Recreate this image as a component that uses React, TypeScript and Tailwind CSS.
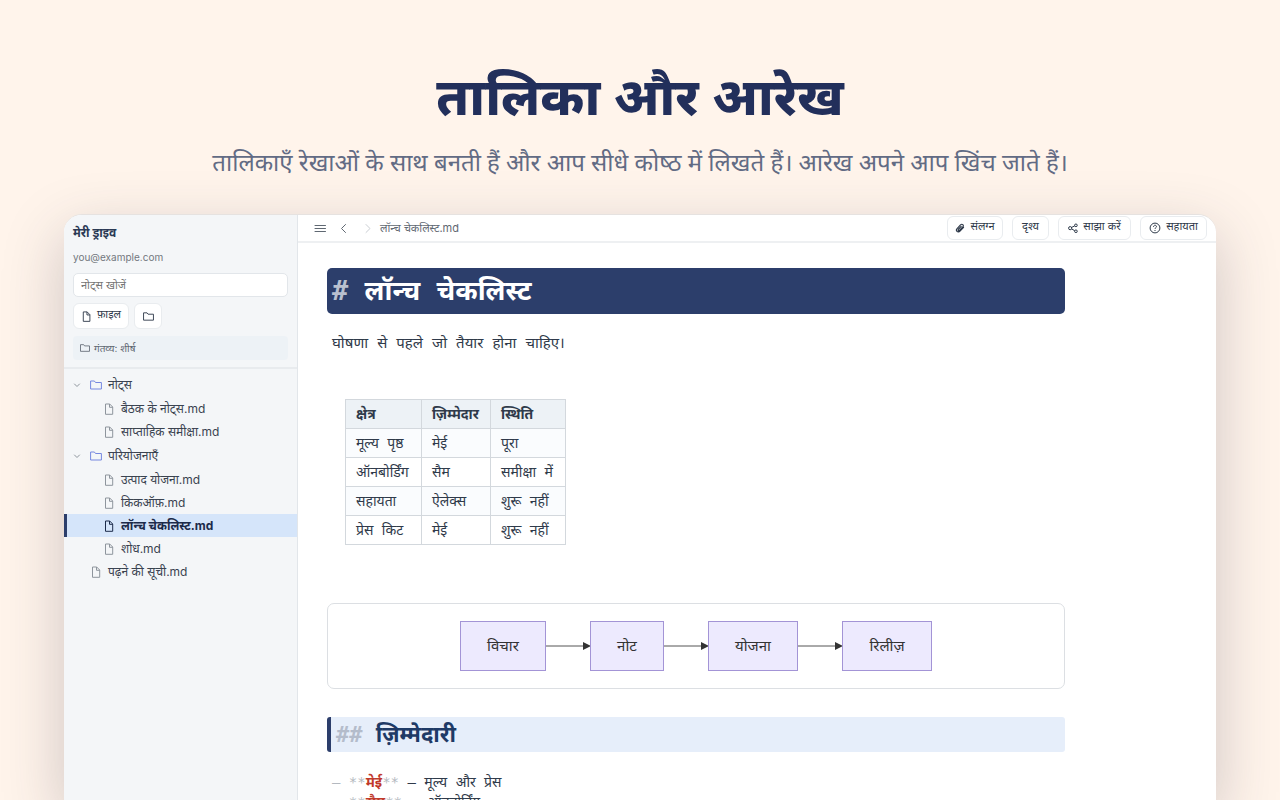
import type { ReactNode } from 'react';
import clsx from 'clsx';

const tree = [
  { name: 'नोट्स', kind: 'folder', depth: 0 },
  { name: 'बैठक के नोट्स.md', kind: 'file', depth: 1 },
  { name: 'साप्ताहिक समीक्षा.md', kind: 'file', depth: 1 },
  { name: 'परियोजनाएँ', kind: 'folder', depth: 0 },
  { name: 'उत्पाद योजना.md', kind: 'file', depth: 1 },
  { name: 'किकऑफ़.md', kind: 'file', depth: 1 },
  { name: 'लॉन्च चेकलिस्ट.md', kind: 'file', depth: 1, active: true },
  { name: 'शोध.md', kind: 'file', depth: 1 },
  { name: 'पढ़ने की सूची.md', kind: 'file', depth: 0 },
];

const rows = [
  ['मूल्य पृष्ठ', 'मेई', 'पूरा'],
  ['ऑनबोर्डिंग', 'सैम', 'समीक्षा में'],
  ['सहायता', 'ऐलेक्स', 'शुरू नहीं'],
  ['प्रेस किट', 'मेई', 'शुरू नहीं'],
];

function FileIcon({ className = 'size-3' }: { className?: string }) {
  return (
    <svg viewBox="0 0 12 12" fill="none" stroke="currentColor" className={clsx('shrink-0', className)}>
      <path d="M2.5 1h4.2L9.7 4v7.3H2.5z" strokeLinejoin="round" />
      <path d="M6.5 1v3.3h3.2" strokeLinejoin="round" />
    </svg>
  );
}

function FolderIcon({ className = 'size-3' }: { className?: string }) {
  return (
    <svg viewBox="0 0 12 12" fill="none" stroke="currentColor" className={clsx('shrink-0', className)}>
      <path d="M.6 2h3.8l1.1 1.5h5.9V10H.6z" strokeLinejoin="round" />
    </svg>
  );
}

function ClipIcon() {
  return (
    <svg viewBox="0 0 12 12" fill="none" stroke="currentColor" strokeLinecap="round" className="size-[10px] shrink-0">
      <path
        d="M10.3 5.2 6 9.8C4.9 11 3.3 11 2.4 10.1 1.5 9.2 1.6 7.7 2.5 6.7L6.6 2.3C7.5 1.4 8.7 1.4 9.4 2 10.1 2.7 10 3.9 9.3 4.7L5.4 8.8C4.9 9.3 4.3 9.3 4 9 3.6 8.6 3.6 8.1 4.1 7.5L7.4 4"
        strokeWidth="1.4"
      />
    </svg>
  );
}

function ShareIcon() {
  return (
    <svg viewBox="0 0 12 12" fill="none" stroke="currentColor" strokeWidth="1.2" className="size-[10px] shrink-0">
      <circle cx="2.6" cy="6.2" r="1.9" />
      <circle cx="9.5" cy="2.8" r="1.6" />
      <circle cx="9.5" cy="9.9" r="1.6" />
      <path d="m4.3 5.3 3.7-1.8M4.3 7.1 8 9.2" />
    </svg>
  );
}

function HelpIcon() {
  return (
    <svg viewBox="0 0 12 12" fill="none" stroke="currentColor" className="size-3 shrink-0">
      <circle cx="6" cy="6" r="4.9" />
      <path d="M4.5 4.8c0-2 3-2 3-.2 0 1.1-1.5 1.1-1.5 2.3" />
      <path d="M6 8v1" />
    </svg>
  );
}

function Stroke({ d, className }: { d: string; className?: string }) {
  return (
    <svg viewBox="0 0 12 12" fill="none" stroke="currentColor" className={clsx('size-3 shrink-0', className)}>
      <path d={d} strokeLinecap="round" strokeLinejoin="round" />
    </svg>
  );
}

function Button({
  icon,
  label,
  children,
  className,
}: {
  icon?: ReactNode;
  label?: string;
  children?: ReactNode;
  className?: string;
}) {
  return (
    <button
      type="button"
      aria-label={label}
      className={clsx(
        'flex items-center justify-center gap-[5px] rounded-md border border-[#e9ecef] bg-white text-[11px] leading-4 text-[#2f3a4a]',
        className,
      )}
    >
      {icon}
      {children && <span className="pb-1 whitespace-nowrap">{children}</span>}
    </button>
  );
}

function Sidebar() {
  return (
    <aside className="flex w-[234px] shrink-0 flex-col border-r border-[#e2e6ea] bg-[#f4f6f8]">
      <div className="flex flex-col border-b-2 border-[#e8ebee] px-[9px] pt-2 pb-[7px]">
        <h2 className="text-[12px] leading-5 font-bold text-[#2b3a55]">मेरी ड्राइव</h2>
        <p className="mt-1 text-[10px] leading-5 text-[#73787e]">you@example.com</p>
        <input
          type="search"
          aria-label="नोट्स खोजें"
          placeholder="नोट्स खोजें"
          className="mt-[6px] h-6 w-full rounded-[5px] border border-[#e2e6ea] bg-white px-[7px] text-[11px] leading-4 outline-none placeholder:text-[#757575]"
        />
        <div className="mt-[6px] flex gap-[5px]">
          <Button icon={<FileIcon className="size-[11px]" />} className="h-[26px] w-14">
            फ़ाइल
          </Button>
          <Button icon={<FolderIcon className="size-[11px]" />} label="नया फ़ोल्डर" className="h-[26px] w-7" />
        </div>
        <div className="mt-[7px] flex h-6 items-center gap-1 rounded bg-[#edf2f6] px-[7px] text-[10px] leading-4 text-[#5f6872]">
          <FolderIcon className="size-[10px]" />
          गंतव्य: शीर्ष
        </div>
      </div>

      <ul className="pt-[3px] text-[12px] leading-5 text-[#3a4350]">
        {tree.map((node) => (
          <li key={node.name}>
            <button
              type="button"
              className={clsx(
                'flex w-full items-center border-l-[3px] pl-1 text-left',
                node.kind === 'folder' ? 'h-[25px]' : 'h-[23px]',
                node.active ? 'border-[#2c3e6b] bg-[#d5e5fa] font-bold text-[#1c2b4a]' : 'border-transparent',
              )}
            >
              {node.kind === 'folder' ? (
                <>
                  <Stroke d="M3.500 5 6 7.500 8.500 5" className="text-[#8e959d]" />
                  <FolderIcon className="ml-[7px] size-3 text-[#7688e0]" />
                </>
              ) : (
                <FileIcon
                  className={clsx(
                    'size-3',
                    node.depth === 1 ? 'ml-8' : 'ml-[19px]',
                    node.active ? 'text-[#1c2b4a]' : 'text-[#8e959d]',
                  )}
                />
              )}
              <span className="ml-[6px]">{node.name}</span>
            </button>
          </li>
        ))}
      </ul>
    </aside>
  );
}

function Toolbar() {
  return (
    <div className="flex h-7 shrink-0 items-center justify-between border-b-2 border-[#eef0f2] pr-[9px] pl-4 text-[#5f6872]">
      <div className="flex items-center">
        <button type="button" aria-label="मेनू">
          <Stroke d="M1 3.500h10.500M1 6.500h10.500M1 9.500h10.500" />
        </button>
        <button type="button" aria-label="पीछे" className="ml-3">
          <Stroke d="M7.500 2.500 3.500 6.500l4 4" />
        </button>
        <button type="button" aria-label="आगे" className="ml-3 text-[#c9cdd2]">
          <Stroke d="m4 2.500 4 4-4 4" />
        </button>
        <span className="ml-[6px] text-[11px] leading-5">लॉन्च चेकलिस्ट.md</span>
      </div>
      <div className="flex gap-[9px]">
        <Button icon={<ClipIcon />} className="h-6 w-14">
          संलग्न
        </Button>
        <Button className="h-6 w-[37px]">दृश्य</Button>
        <Button icon={<ShareIcon />} className="h-6 w-[73px]">
          साझा करें
        </Button>
        <Button icon={<HelpIcon />} className="h-6 w-[67px]">
          सहायता
        </Button>
      </div>
    </div>
  );
}

function Arrow() {
  return (
    <svg viewBox="0 0 44 10" className="h-[10px] w-11 shrink-0">
      <path d="M0 5h38" stroke="#555" />
      <path d="m37 1 8 4-8 4z" fill="#333" />
    </svg>
  );
}

function Node({ children, className }: { children: ReactNode; className: string }) {
  return (
    <div
      className={clsx(
        'flex h-[50px] items-center justify-center border border-[#a394d6] bg-[#edeafe] pb-[2px] text-[15px] leading-6 text-[#333]',
        className,
      )}
    >
      {children}
    </div>
  );
}

function Owner({ name, area }: { name: string; area: string }) {
  return (
    <li>
      <span className="text-[#b4b9c0]">– **</span>
      <strong className="text-[#c0392b]">{name}</strong>
      <span className="text-[#b4b9c0]">**</span> — {area}
    </li>
  );
}

function Editor() {
  return (
    <article className="max-w-[796px] px-[29px] pt-[25px] font-['DejaVu_Sans_Mono','Noto_Sans',monospace] text-[14px] text-[#2f3a4a]">
      <h1 className="flex h-[46px] items-center rounded-[5px] bg-[#2c3e6b] px-[5px] text-[27px] leading-9 font-bold whitespace-pre text-white">
        <span className="text-[#b9c0cf]">#</span> लॉन्च चेकलिस्ट
      </h1>
      <p className="mt-[17px] px-[5px] text-[15px] leading-6">घोषणा से पहले जो तैयार होना चाहिए।</p>

      <table className="mt-11 ml-[18px] table-fixed border-collapse">
        <colgroup>
          <col className="w-[76px]" />
          <col className="w-[69px]" />
          <col className="w-[75px]" />
        </colgroup>
        <thead>
          <tr className="bg-[#edf2f6]">
            {['क्षेत्र', 'ज़िम्मेदार', 'स्थिति'].map((h) => (
              <th key={h} className="h-[29px] border border-[#d3d8dd] px-[10px] text-left leading-5 whitespace-nowrap">
                {h}
              </th>
            ))}
          </tr>
        </thead>
        <tbody>
          {rows.map((row) => (
            <tr key={row[0]} className="odd:bg-[#fafcfe]">
              {row.map((cell, i) => (
                <td key={i} className="h-[29px] border border-[#d3d8dd] px-[10px] leading-5 whitespace-nowrap">
                  {cell}
                </td>
              ))}
            </tr>
          ))}
        </tbody>
      </table>

      <div className="mt-[58px] flex h-[86px] items-center justify-center rounded-[7px] border border-[#dcdfe3] font-['Noto_Sans',sans-serif]">
        <Node className="w-[86px]">विचार</Node>
        <Arrow />
        <Node className="w-[74px]">नोट</Node>
        <Arrow />
        <Node className="w-[90px]">योजना</Node>
        <Arrow />
        <Node className="w-[90px]">रिलीज़</Node>
      </div>

      <h2 className="mt-7 flex h-[35px] items-center rounded-[3px] border-l-4 border-[#2c3e6b] bg-[#e6eefa] px-[5px] text-[22px] leading-8 font-bold whitespace-pre text-[#1e3a66]">
        <span className="text-[#b4bccb]">##</span> ज़िम्मेदारी
      </h2>
      <ul className="mt-5 px-[5px] leading-5">
        <Owner name="मेई" area="मूल्य और प्रेस" />
        <Owner name="सैम" area="ऑनबोर्डिंग" />
      </ul>
    </article>
  );
}

export default function App() {
  return (
    <div className="flex h-screen flex-col overflow-hidden bg-[#fff4eb] font-['Inter','Noto_Sans',sans-serif]">
      <header className="px-16 pt-[58px] pb-[34px] text-center font-['Noto_Sans',sans-serif]">
        <h1 className="text-[52px] leading-[74px] font-extrabold text-[#222f5b]">तालिका और आरेख</h1>
        <p className="mt-3 text-2xl leading-9 text-[#626b84]">
          तालिकाएँ रेखाओं के साथ बनती हैं और आप सीधे कोष्‍ठ में लिखते हैं। आरेख अपने आप खिंच जाते हैं।
        </p>
      </header>
      <main className="mx-16 flex min-h-0 flex-1 overflow-hidden rounded-t-[18px] border-t border-[#e6e2e0] bg-white shadow-[0_20px_60px_rgba(60,50,70,0.25)]">
        <Sidebar />
        <section className="flex min-w-0 flex-1 flex-col">
          <Toolbar />
          <Editor />
        </section>
      </main>
    </div>
  );
}
